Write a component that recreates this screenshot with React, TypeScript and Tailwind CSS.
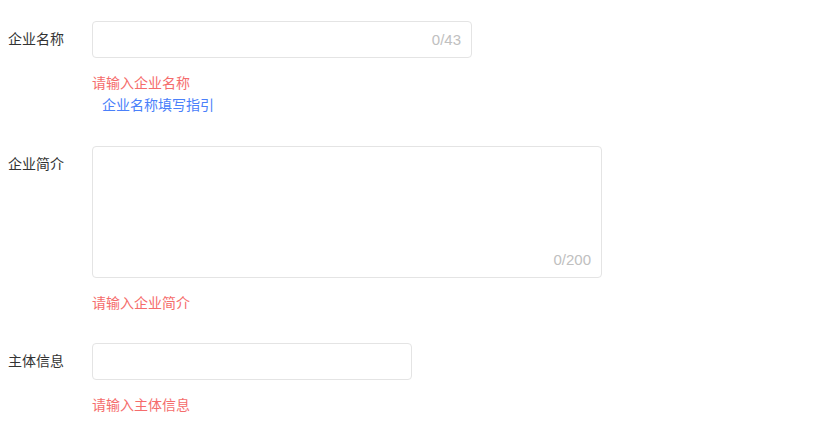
import React from 'react';

const font = { fontFamily: '"Noto Sans", "Noto Sans CJK SC", sans-serif' };
const counterFont = { fontFamily: '"Liberation Sans", Arial, sans-serif' };

interface FieldProps {
  label: string;
  error: string;
  children: React.ReactNode;
  extra?: React.ReactNode;
}

const Field = ({ label, error, children, extra }: FieldProps) => (
  <div className="flex">
    <label className="w-[92px] shrink-0 pl-2 text-[14px] leading-[36px] text-[#333]">{label}</label>
    <div className="flex flex-col">
      {children}
      <div className="mt-[15px] text-[14px] leading-5 text-[#f56c6c]">{error}</div>
      {extra}
    </div>
  </div>
);

export default function App() {
  return (
    <div className="min-h-screen bg-white pt-[21px]" style={font}>
      <Field
        label="企业名称"
        error="请输入企业名称"
        extra={
          <a className="mt-[2px] pl-[10px] text-[14px] leading-5 text-[#4a80fa] cursor-pointer">
            企业名称填写指引
          </a>
        }
      >
        <div className="relative h-[37px] w-[380px] rounded border border-[#e4e4e4]">
          <input className="h-full w-full rounded bg-transparent px-3 pr-14 text-[14px] outline-none" />
          <span className="absolute right-[10px] top-[8px] text-[15px] leading-5 text-[#c0c0c0]" style={counterFont}>0/43</span>
        </div>
      </Field>

      <div className="mt-[31px]">
        <Field label="企业简介" error="请输入企业简介">
          <div className="relative h-[132px] w-[510px] rounded border border-[#e4e4e4]">
            <textarea className="h-full w-full resize-none rounded bg-transparent px-3 py-2 text-[14px] outline-none" />
            <span className="absolute bottom-[7px] right-[10px] text-[15px] leading-5 text-[#c0c0c0]" style={counterFont}>0/200</span>
          </div>
        </Field>
      </div>

      <div className="mt-[30px]">
        <Field label="主体信息" error="请输入主体信息">
          <div className="h-[37px] w-[320px] rounded border border-[#e4e4e4]">
            <input className="h-full w-full rounded bg-transparent px-3 text-[14px] outline-none" />
          </div>
        </Field>
      </div>
    </div>
  );
}
